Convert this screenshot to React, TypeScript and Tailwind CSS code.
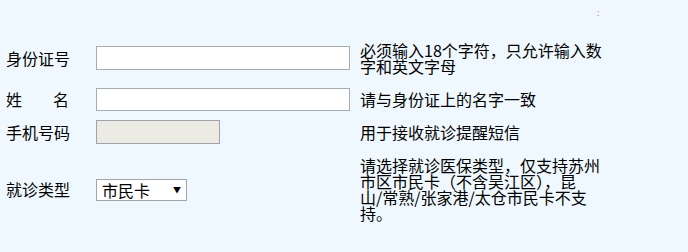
import React from 'react';

const font = { fontFamily: '"Noto Sans CJK SC", "Liberation Sans", sans-serif' };

function Label({ children, spread = false }: { children: React.ReactNode; spread?: boolean }) {
  return (
    <div className="w-[96px] shrink-0 pl-[6px]">
      <div className={spread ? 'flex w-[63px] justify-between' : ''}>{children}</div>
    </div>
  );
}

function Hint({ lines }: { lines: string[] }) {
  return (
    <div className="whitespace-nowrap leading-[16px]">
      {lines.map((l, i) => (
        <div key={i}>{l}</div>
      ))}
    </div>
  );
}

export default function App() {
  return (
    <div className="h-[252px] w-[688px] bg-[#f0f8ff] text-[16px] text-black" style={font}>
      {/* little marker top right */}
      <div className="flex h-[41px] pl-[597px] pt-[8px]">
        <span className="text-[9px] leading-none text-[#c09090]">:</span>
      </div>

      <div className="flex flex-col">
        {/* ID number */}
        <div className="flex h-[34px] items-center">
          <Label>身份证号</Label>
          <div className="w-[264px] shrink-0">
            <input className="block h-[24px] w-[254px] border border-[#a5acb2] bg-white outline-none" />
          </div>
          <Hint lines={['必须输入18个字符，只允许输入数', '字和英文字母']} />
        </div>

        {/* name */}
        <div className="mt-[8px] flex h-[32px] items-center">
          <Label spread>
            <span>姓</span>
            <span>名</span>
          </Label>
          <div className="w-[264px] shrink-0">
            <input className="block h-[23px] w-[254px] border border-[#a5acb2] bg-white outline-none" />
          </div>
          <Hint lines={['请与身份证上的名字一致']} />
        </div>

        {/* mobile */}
        <div className="flex h-[34px] items-center">
          <Label>手机号码</Label>
          <div className="w-[264px] shrink-0">
            <input disabled className="block h-[24px] w-[124px] border border-[#a0a4a8] bg-[#ebebe4] outline-none" />
          </div>
          <Hint lines={['用于接收就诊提醒短信']} />
        </div>

        {/* card type */}
        <div className="mt-[8px] flex h-[64px] items-center">
          <Label>就诊类型</Label>
          <div className="w-[264px] shrink-0 pt-[2px]">
            <div className="flex h-[22px] w-[91px] items-center justify-between border border-[#a5a5a5] bg-white pl-[5px] pr-[5px]">
              <span className="leading-none">市民卡</span>
              <span className="text-[8px] leading-none">▼</span>
            </div>
          </div>
          <Hint
            lines={[
              '请选择就诊医保类型，仅支持苏州',
              '市区市民卡（不含吴江区），昆',
              '山/常熟/张家港/太仓市民卡不支',
              '持。',
            ]}
          />
        </div>
      </div>
    </div>
  );
}
